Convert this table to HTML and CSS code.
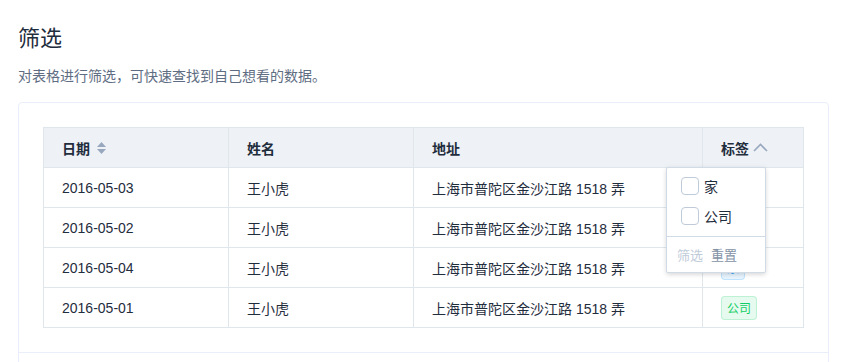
FILE: index.html
```html
<!DOCTYPE html>
<html lang="zh-CN">
<head>
<meta charset="utf-8">
<title>筛选</title>
<link rel="stylesheet" href="styles.css">
</head>
<body>
<div class="page">
  <h3 class="title">筛选</h3>
  <p class="desc">对表格进行筛选，可快速查找到自己想看的数据。</p>
  <div class="demo-block">
    <div class="demo-source">
      <div class="table-wrap">
        <table class="table">
          <thead>
            <tr>
              <th class="c-date"><span class="th-inner">日期<svg class="sort-icon" width="9" height="12" viewBox="0 0 9 12"><path d="M0 5 L4.5 0 L9 5 Z" fill="#97a8be"/><path d="M0 7 L4.5 12 L9 7 Z" fill="#97a8be"/></svg></span></th>
              <th class="c-name">姓名</th>
              <th class="c-addr">地址</th>
              <th class="c-tag last"><span class="th-inner">标签<svg class="chev-icon" width="15" height="9" viewBox="0 0 15 9"><polyline points="1,8 7.5,1.5 14,8" fill="none" stroke="#97a8be" stroke-width="1.6"/></svg></span></th>
            </tr>
          </thead>
          <tbody>
            <tr>
              <td>2016-05-03</td>
              <td>王小虎</td>
              <td>上海市普陀区金沙江路 1518 弄</td>
              <td class="last"><span class="tag tag-green">公司</span></td>
            </tr>
            <tr>
              <td>2016-05-02</td>
              <td>王小虎</td>
              <td>上海市普陀区金沙江路 1518 弄</td>
              <td class="last"><span class="tag tag-blue">家</span></td>
            </tr>
            <tr>
              <td>2016-05-04</td>
              <td>王小虎</td>
              <td>上海市普陀区金沙江路 1518 弄</td>
              <td class="last"><span class="tag tag-blue">家</span></td>
            </tr>
            <tr>
              <td>2016-05-01</td>
              <td>王小虎</td>
              <td>上海市普陀区金沙江路 1518 弄</td>
              <td class="last"><span class="tag tag-green">公司</span></td>
            </tr>
          </tbody>
        </table>
        <div class="filter-pop">
          <div class="filter-list">
            <label class="filter-item"><span class="checkbox"></span><span class="filter-label">家</span></label>
            <label class="filter-item"><span class="checkbox"></span><span class="filter-label">公司</span></label>
          </div>
          <div class="filter-footer">
            <span class="btn btn-disabled">筛选</span>
            <span class="btn">重置</span>
          </div>
        </div>
      </div>
    </div>
    <div class="demo-meta"></div>
  </div>
</div>
</body>
</html>
```
FILE: styles.css
```css
html, body {
  margin: 0;
  padding: 0;
  overflow: hidden;
  background: #fff;
}
body {
  font-family: "Liberation Sans", "Noto Sans CJK SC", sans-serif;
  color: #1f2d3d;
}
.page {
  padding: 0 18px;
}
.title {
  margin: 22px 0 0;
  font-size: 22px;
  line-height: 33px;
  font-weight: 400;
  color: #1f2d3d;
}
.desc {
  margin: 11px 0 0;
  font-size: 14px;
  line-height: 21px;
  color: #5e6d82;
}
.demo-block {
  margin-top: 15px;
  width: 811px;
  box-sizing: border-box;
  border: 1px solid #eaeefb;
  border-radius: 4px;
}
.demo-source {
  padding: 24px;
}
.demo-meta {
  border-top: 1px solid #eaeefb;
  height: 20px;
}
.table-wrap {
  position: relative;
  width: 761px;
  box-sizing: border-box;
  border: 1px solid #dfe6ec;
  border-bottom: none;
}
.table {
  width: 759px;
  border-collapse: separate;
  border-spacing: 0;
  table-layout: fixed;
  font-size: 14px;
}
.table th,
.table td {
  height: 39px;
  padding: 0 18px;
  border-right: 1px solid #dfe6ec;
  border-bottom: 1px solid #dfe6ec;
  text-align: left;
  white-space: nowrap;
  color: #1f2d3d;
  box-sizing: content-box;
}
.table th {
  background: #eef1f6;
  font-weight: 700;
}
.table .last {
  border-right: none;
}
.c-date { width: 148px; }
.c-name { width: 148px; }
.c-addr { width: 252px; }
.c-tag { width: 64px; }
.th-inner {
  display: inline-flex;
  align-items: center;
}
.sort-icon {
  margin-left: 7px;
}
.chev-icon {
  margin-left: 4px;
}
.tag {
  display: inline-flex;
  align-items: center;
  height: 24px;
  box-sizing: border-box;
  padding: 0 5px;
  font-size: 12px;
  border-radius: 4px;
  border: 1px solid;
  vertical-align: middle;
}
.tag-blue {
  background: rgba(32, 160, 255, 0.1);
  border-color: rgba(32, 160, 255, 0.2);
  color: #20a0ff;
}
.tag-green {
  background: rgba(18, 206, 102, 0.1);
  border-color: rgba(18, 206, 102, 0.2);
  color: #13ce66;
}
.filter-pop {
  position: absolute;
  left: 622px;
  top: 39px;
  width: 100px;
  box-sizing: border-box;
  background: #fff;
  border: 1px solid #d1dbe5;
  border-radius: 2px;
  box-shadow: 0 2px 4px rgba(0, 0, 0, 0.12), 0 0 6px rgba(0, 0, 0, 0.04);
}
.filter-list {
  display: flex;
  flex-direction: column;
  gap: 12px;
  padding: 9px 14px 11px;
}
.filter-item {
  display: flex;
  align-items: center;
  height: 18px;
  font-size: 14px;
  color: #1f2d3d;
}
.checkbox {
  width: 18px;
  height: 18px;
  box-sizing: border-box;
  border: 1px solid #bfcbd9;
  border-radius: 4px;
  background: #fff;
  margin-right: 5px;
}
.filter-footer {
  border-top: 1px solid #d1dbe5;
  display: flex;
  gap: 8px;
  padding: 0 10px;
  height: 35px;
  align-items: center;
  font-size: 13px;
}
.btn {
  color: #8492a6;
}
.btn-disabled {
  color: #bfcbd9;
}
```
